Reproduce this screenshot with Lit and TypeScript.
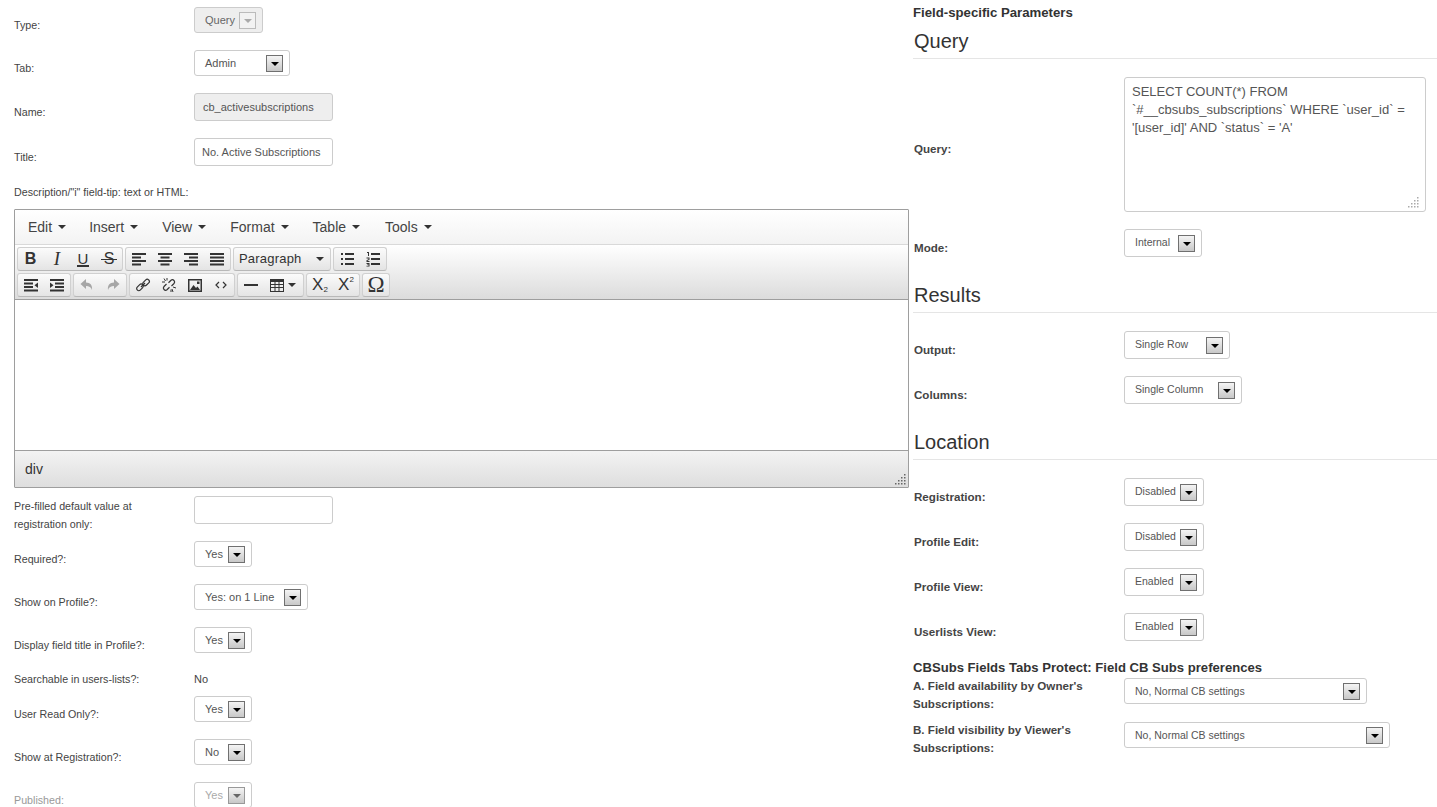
import { LitElement, html, css, svg } from "lit";
import { customElement } from "lit/decorators.js";

const bars = (rows: [number, number, number][]) =>
  rows.map(([x, y, w]) => svg`<rect x=${x} y=${y} width=${w} height="2"></rect>`);

const icons: Record<string, unknown> = {
  alignleft: bars([[1, 2, 14], [1, 5.5, 9], [1, 9, 14], [1, 12.5, 9]]),
  aligncenter: bars([[1, 2, 14], [3.5, 5.5, 9], [1, 9, 14], [3.5, 12.5, 9]]),
  alignright: bars([[1, 2, 14], [6, 5.5, 9], [1, 9, 14], [6, 12.5, 9]]),
  alignjustify: bars([[1, 2, 14], [1, 5.5, 14], [1, 9, 14], [1, 12.5, 14]]),
  bullist: svg`<rect x="6" y="2" width="9" height="2"></rect><rect x="6" y="7" width="9" height="2"></rect><rect x="6" y="12" width="9" height="2"></rect><rect x="2" y="2" width="2" height="2"></rect><rect x="2" y="7" width="2" height="2"></rect><rect x="2" y="12" width="2" height="2"></rect>`,
  numlist: svg`<rect x="6" y="2" width="9" height="2"></rect><rect x="6" y="7" width="9" height="2"></rect><rect x="6" y="12" width="9" height="2"></rect><path d="M2 1h2v4H3V2H2zM1.500 6.500h3v2.200l-2 1v.3h2v1h-3V9.200l2-1v-.700h-2zM1.500 12h3v3.500h-3v-.8h2v-.6h-1.500v-.6h1.500v-.6h-2z"></path>`,
  outdent: svg`<rect x="1" y="2" width="14" height="2"></rect><rect x="1" y="5.500" width="9" height="2"></rect><rect x="1" y="9" width="9" height="2"></rect><rect x="1" y="12.500" width="14" height="2"></rect><path d="M15 5.500v5.500l-3.500-2.750z"></path>`,
  indent: svg`<rect x="1" y="2" width="14" height="2"></rect><rect x="6" y="5.500" width="9" height="2"></rect><rect x="6" y="9" width="9" height="2"></rect><rect x="1" y="12.500" width="14" height="2"></rect><path d="M1 5.500v5.500l3.500-2.750z"></path>`,
  undo: svg`<path d="M7 2 1.500 7 7 12V9c3 0 5 1 6 4 .6-4.500-1.500-7.500-6-7.500z"></path>`,
  redo: svg`<path d="M9 2l5.500 5L9 12V9c-3 0-5 1-6 4-.6-4.500 1.500-7.500 6-7.500z"></path>`,
  link: svg`<g fill="none" stroke="currentColor" stroke-width="1.200"><rect x="1.200" y="8.200" width="7.500" height="4.200" rx="2" transform="rotate(-45 5 10.300)"></rect><rect x="7.300" y="3.500" width="7.500" height="4.200" rx="2" transform="rotate(-45 11 5.600)"></rect><path d="M6 10l4-4"></path></g>`,
  unlink: svg`<g fill="none" stroke="currentColor" stroke-width="1.200"><path d="M5.500 7 3 9.500a2.200 2.200 0 0 0 3 3.200L8.500 10.300"></path><path d="M10.500 9 13 6.500a2.200 2.200 0 0 0-3-3.200L7.500 5.700"></path></g><g fill="none" stroke="currentColor"><path d="M3 1.500l1.500 2.500M1 5h3M12 15l-1-3M15 11l-3-1M6 1v2.500M10 15v-2.500"></path></g>`,
  image: svg`<path fill-rule="evenodd" d="M1 2h14v13H1zM2.500 3.500v10h11v-10z"></path><path d="M3 13l3.500-5 2.500 3 1.500-1.500 2.500 3.500z"></path><rect x="10" y="4.500" width="2.500" height="2.500"></rect>`,
  code: svg`<path fill="none" stroke="currentColor" stroke-width="1.200" d="M6 5 3 8l3 3M10 5l3 3-3 3"></path>`,
  hr: svg`<rect x="1" y="7" width="14" height="2"></rect>`,
  table: svg`<path fill-rule="evenodd" d="M1 2h14v13H1zM2 5v2h3.500V5zM6.500 5v2h3V5zM10.500 5v2H14V5zM2 8v2h3.500V8zM6.500 8v2h3V8zM10.500 8v2H14V8zM2 11v3h3.500v-3zM6.500 11v3h3v-3zM10.500 11v3H14v-3z"></path>`,
};

type Btn = { icon?: string; text?: string; cls?: string; sub?: string; caret?: boolean; off?: boolean };
const row1: Btn[][] = [
  [{ text: "B", cls: "b" }, { text: "I", cls: "i" }, { text: "U", cls: "u" }, { text: "S", cls: "s" }],
  [{ icon: "alignleft" }, { icon: "aligncenter" }, { icon: "alignright" }, { icon: "alignjustify" }],
];
const row1b: Btn[][] = [[{ icon: "bullist" }, { icon: "numlist" }]];
const row2: Btn[][] = [
  [{ icon: "outdent" }, { icon: "indent" }],
  [{ icon: "undo", off: true }, { icon: "redo", off: true }],
  [{ icon: "link" }, { icon: "unlink" }, { icon: "image" }, { icon: "code" }],
  [{ icon: "hr" }, { icon: "table", caret: true }],
  [{ text: "X", cls: "x", sub: "2" }, { text: "X", cls: "x", sub: "²" }],
  [{ text: "Ω", cls: "om" }],
];

const menus = ["Edit", "Insert", "View", "Format", "Table", "Tools"];

const grip = (fill: string) => html`<svg class="grip" width="12" height="12" viewBox="0 0 12 12" fill=${fill}>
  ${[[10, 2], [7, 5], [10, 5], [4, 8], [7, 8], [10, 8], [1, 11], [4, 11], [7, 11], [10, 11]].map(
    ([x, y]) => svg`<rect x=${x} y=${y - 1} width="1.500" height="1.500"></rect>`
  )}
</svg>`;

@customElement("app-root")
export class AppRoot extends LitElement {
  static styles = css`
    :host { display: block; height: 807px; overflow: hidden; background: #fff; font-family: "Liberation Sans", Arial, sans-serif; font-size: 11px; line-height: 18px; color: #444; }
    * { box-sizing: border-box; }
    .page { display: flex; align-items: flex-start; }
    .left { width: 895px; margin: 7px 0 0 14px; flex: none; display: flex; flex-direction: column; height: 801px; }
    .right { width: 524px; margin-left: 4px; flex: none; display: flex; flex-direction: column; padding-top: 4px; }
    .row { display: flex; align-items: flex-start; margin-bottom: 17px; flex: none; }
    .lab { width: 180px; flex: none; padding-top: 9px; height: 26px; font-size: 10.7px; }
    .row.input-row .lab { height: 28px; padding-top: 10px; }
    .two { padding-top: 1px; height: auto; }
    .row.two-row { margin-bottom: 8px; }
    .plain { margin-bottom: 8px; }
    .plain .lab { padding-top: 0; height: 18px; }
    .lab.off { color: #999; }
    .select { height: 26px; border: 1px solid #ccc; border-radius: 3px; display: flex; align-items: center; justify-content: space-between; padding: 0 6px 0 10px; color: #555; background: #fff; flex: none; }
    .select.dis { background: #eee; color: #666; }
    .select.off { color: #aaa; }
    .arrow { width: 17px; height: 17px; border: 1px solid #707070; background: linear-gradient(#f4f4f4, #c8c8c8); display: flex; align-items: center; justify-content: center; flex: none; }
    .arrow i { display: block; width: 0; height: 0; margin-top: 2px; border: 4px solid transparent; border-top-color: #000; border-bottom: 0; }
    .dis .arrow { border-color: #bbb; background: #f2f2f2; }
    .dis .arrow i { border-top-color: #aaa; }
    .select.off .arrow i { border-top-color: #666; }
    .select.off .arrow { border-color: #999; }
    .input { width: 139px; height: 28px; border: 1px solid #ccc; border-radius: 3px; padding: 0 7px; display: flex; align-items: center; color: #555; background: #fff; white-space: nowrap; }
    .input.ro { background: #eee; padding: 0 8px; }
    .desc { margin-bottom: 8px; font-size: 10.7px; flex: none; }
    .editor { height: 279px; border: 1px solid #9e9e9e; border-radius: 1px; display: flex; flex-direction: column; margin-bottom: 8px; color: #333; font-size: 14px; flex: none; }
    .menubar { height: 35px; flex: none; display: flex; align-items: center; padding-left: 13px; border-bottom: 1px solid #d9d9d9; background: linear-gradient(#fff, #f3f3f3); }
    .menu { display: flex; align-items: center; margin-right: 24px; color: #444; }
    .menu:first-child { margin-right: 23px; }
    .menu:nth-child(5) { margin-right: 25px; }
    .caret { width: 0; height: 0; border: 4px solid transparent; border-top-color: #333; border-bottom: 0; margin-left: 6px; }
    .toolbar { height: 55px; flex: none; padding: 2px 0 0 2px; display: flex; flex-direction: column; gap: 2px; border-bottom: 1px solid #9e9e9e; background: linear-gradient(#fff, #dcdcdc); }
    .tbrow { display: flex; gap: 2px; height: 24px; }
    .group { display: flex; border: 1px solid #d0d0d0; border-bottom-color: #b8b8b8; border-radius: 3px; background: linear-gradient(#fbfbfb, #e4e4e4); height: 24px; }
    .btn { width: 26px; height: 22px; display: flex; align-items: center; justify-content: center; color: #333; position: relative; }
    .btn svg.ic { width: 16px; height: 16px; fill: currentColor; display: block; }
    .btn.wide { width: 39px; gap: 3px; justify-content: flex-start; padding-left: 5px; }
    .btn.wide .caret { margin-left: 0; }
    .btn.off { color: #a6a6a6; }
    .btn .b { font-weight: 700; font-size: 16px; margin-left: -1px; }
    .btn .i { font-style: italic; font-size: 19px; font-family: "Liberation Serif", serif; }
    .btn .u { font-size: 15px; line-height: 13px; border-bottom: 2px solid #333; padding: 0 1px; }
    .btn .s { font-size: 16px; position: relative; padding: 0 2px; }
    .btn .s::after { content: ""; position: absolute; left: -1px; right: -1px; top: 9px; height: 1px; background: #333; }
    .btn .x { font-size: 17px; font-weight: 400; }
    .btn .om { font-size: 23px; font-family: "Liberation Serif", serif; }
    .btn sub, .btn sup { font-size: 8px; line-height: 8px; }
    .btn sub { margin-top: 10px; }
    .btn sup { margin-top: -10px; }
    .para { width: 98px; display: flex; align-items: center; justify-content: space-between; padding: 0 6px 0 5px; font-size: 13px; letter-spacing: 0.2px; }
    .body { flex: 1; background: #fff; }
    .status { height: 37px; flex: none; border-top: 1px solid #9e9e9e; display: flex; align-items: center; padding-left: 10px; position: relative; background: linear-gradient(#f3f3f3, #dedede); }
    .status .grip { position: absolute; right: 2px; bottom: 2px; }
    .h-small { font-weight: 700; font-size: 13.2px; color: #333; line-height: 18px; }
    h3 { margin: 8px 0 18px; padding: 0 0 6px 1px; border-bottom: 1px solid #e5e5e5; font-size: 20px; font-weight: 400; line-height: 22px; color: #333; }
    h3.next { margin-top: 10px; }
    .right .lab { width: 211px; height: 28px; padding: 10px 0 0 1px; font-size: 11.6px; font-weight: 700; color: #444; }
    .right .select { height: 28px; font-size: 10.5px; padding-bottom: 0; }
    .right .select > span:first-child { margin-top: -2px; }
    .area { width: 302px; height: 135px; border: 1px solid #ccc; border-radius: 3px; padding: 5px 7px; font-size: 13px; line-height: 18px; color: #555; position: relative; flex: none; white-space: nowrap; }
    .area .grip { position: absolute; right: 6px; bottom: 3px; }
    .right .lab.q { padding-top: 63px; height: auto; }
    .h-cb { font-weight: 700; font-size: 13.1px; color: #333; line-height: 18px; margin-top: 1px; }
    .right .sub-row { margin-bottom: 8px; }
    .right .sub-row .lab { padding: 0; height: auto; }
    .right .sub-row .select { margin-top: 1px; height: 26px; }
    .right .sub-row .select > span:first-child { margin-top: 0; }
  `;

  private sel(text: string, width: number, cls = "") {
    return html`<div class="select ${cls}" style="width:${width}px"><span>${text}</span><span class="arrow"><i></i></span></div>`;
  }

  private row(label: string, text: string, width: number, cls = "") {
    return html`<div class="row"><div class="lab ${cls}">${label}</div>${this.sel(text, width, cls)}</div>`;
  }

  private btn(b: Btn) {
    return html`<div class="btn ${b.off ? "off" : ""} ${b.caret ? "wide" : ""}">
      ${b.icon ? html`<svg class="ic" viewBox="0 0 16 16">${icons[b.icon]}</svg>` : ""}
      ${b.text ? html`<span class=${b.cls ?? ""}>${b.text}</span>` : ""}
      ${b.sub === "2" ? html`<sub>2</sub>` : b.sub ? html`<sup>2</sup>` : ""}
      ${b.caret ? html`<span class="caret"></span>` : ""}
    </div>`;
  }

  private groups(g: Btn[][]) {
    return g.map((x) => html`<div class="group">${x.map((b) => this.btn(b))}</div>`);
  }

  render() {
    return html`<div class="page">
      <div class="left">
        ${this.row("Type:", "Query", 69, "dis")}
        ${this.row("Tab:", "Admin", 96)}
        <div class="row input-row"><div class="lab">Name:</div><div class="input ro">cb_activesubscriptions</div></div>
        <div class="row input-row"><div class="lab">Title:</div><div class="input">No. Active Subscriptions</div></div>
        <div class="desc">Description/"i" field-tip: text or HTML:</div>
        <div class="editor">
          <div class="menubar">${menus.map((m) => html`<div class="menu">${m}<span class="caret"></span></div>`)}</div>
          <div class="toolbar">
            <div class="tbrow">
              ${this.groups(row1)}
              <div class="group para">Paragraph<span class="caret"></span></div>
              ${this.groups(row1b)}
            </div>
            <div class="tbrow">${this.groups(row2)}</div>
          </div>
          <div class="body"></div>
          <div class="status">div${grip("#666")}</div>
        </div>
        <div class="row two-row"><div class="lab two">Pre-filled default value at<br />registration only:</div><div class="input"></div></div>
        ${this.row("Required?:", "Yes", 58)}
        ${this.row("Show on Profile?:", "Yes: on 1 Line", 114)}
        ${this.row("Display field title in Profile?:", "Yes", 58)}
        <div class="row plain"><div class="lab">Searchable in users-lists?:</div><div>No</div></div>
        ${this.row("User Read Only?:", "Yes", 58)}
        ${this.row("Show at Registration?:", "No", 58)}
        ${this.row("Published:", "Yes", 58, "off")}
      </div>
      <div class="right">
        <div class="h-small">Field-specific Parameters</div>
        <h3>Query</h3>
        <div class="row">
          <div class="lab q">Query:</div>
          <div class="area">SELECT COUNT(*) FROM<br />\`#__cbsubs_subscriptions\` WHERE \`user_id\` =<br />'[user_id]' AND \`status\` = 'A'${grip("#aaa")}</div>
        </div>
        ${this.row("Mode:", "Internal", 78)}
        <h3 class="next">Results</h3>
        ${this.row("Output:", "Single Row", 106)}
        ${this.row("Columns:", "Single Column", 118)}
        <h3 class="next">Location</h3>
        ${this.row("Registration:", "Disabled", 80)}
        ${this.row("Profile Edit:", "Disabled", 80)}
        ${this.row("Profile View:", "Enabled", 80)}
        ${this.row("Userlists View:", "Enabled", 80)}
        <div class="h-cb">CBSubs Fields Tabs Protect: Field CB Subs preferences</div>
        <div class="row sub-row"><div class="lab">A. Field availability by Owner's<br />Subscriptions:</div>${this.sel("No, Normal CB settings", 243)}</div>
        <div class="row sub-row"><div class="lab">B. Field visibility by Viewer's<br />Subscriptions:</div>${this.sel("No, Normal CB settings", 266)}</div>
      </div>
    </div>`;
  }
}
